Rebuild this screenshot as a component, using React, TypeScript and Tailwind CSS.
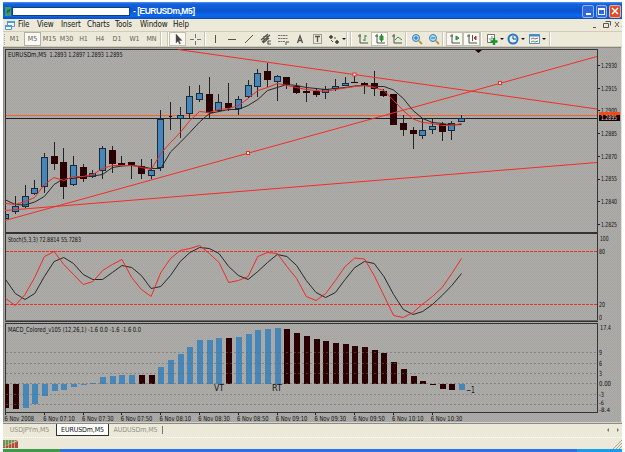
import React from "react";

const STEP = 9.7;
const X0 = 5.6;
const cx = (i: number) => X0 + i * STEP;

// [wickTop, bodyTop, bodyBottom, wickBottom, kind] where kind is 0 falling, 1 rising, 2 doji
const candles: number[][] = [
  [206, 214, 219, 220, 1], [196, 206, 212, 214, 1], [185, 196, 207, 208, 1], [180, 188, 194, 195, 1],
  [153, 157, 187, 193, 1], [142, 156, 164, 170, 0], [148, 162, 187, 199, 0], [156, 165, 185, 186, 1],
  [164, 167, 179, 182, 0], [170, 173, 177, 178, 1], [146, 148, 171, 179, 1], [146, 150, 164, 173, 0],
  [156, 163, 166, 166, 0], [162, 162, 165, 179, 0], [159, 166, 174, 179, 0], [159, 170, 176, 179, 1],
  [110, 119, 168, 171, 1], [102, 116, 117, 130, 2], [107, 115, 119, 138, 1], [86, 96, 114, 119, 1],
  [85, 93, 100, 102, 1], [77, 94, 113, 118, 0], [94, 102, 111, 112, 1], [83, 103, 108, 111, 0],
  [96, 99, 109, 115, 1], [80, 85, 97, 98, 1], [69, 73, 87, 97, 1], [63, 71, 80, 87, 0],
  [75, 76, 82, 101, 1], [77, 77, 85, 89, 0], [83, 86, 93, 94, 0], [83, 91, 93, 102, 0],
  [88, 91, 95, 97, 0], [86, 89, 93, 99, 1], [79, 86, 89, 91, 1], [77, 83, 86, 86, 1],
  [74, 82, 83, 83, 0], [82, 83, 85, 94, 0], [71, 83, 89, 96, 0], [89, 91, 96, 97, 0],
  [94, 94, 125, 125, 0], [115, 123, 130, 136, 0], [127, 130, 134, 149, 0], [118, 130, 136, 139, 1],
  [118, 126, 130, 134, 1], [122, 124, 132, 141, 0], [121, 123, 131, 140, 1], [115, 118, 122, 122, 1],
];

const fastMa = [203, 204, 201, 197, 184, 177, 180, 176, 176, 174, 168, 165, 165, 165, 167, 169, 153, 142, 132, 120, 111, 112, 109, 108, 105, 98, 90, 87, 83, 85, 87, 89, 90, 91, 89, 87.5, 86, 85, 87, 90, 100, 110, 118.5, 122, 123, 125, 125, 123];
const slowMa = [199.5, 204, 204.5, 201.5, 196, 184, 178, 178, 176, 175.5, 174, 167, 165.5, 165, 166, 168, 168, 151.5, 142, 132, 121.5, 113, 111, 109, 109, 105, 99, 90, 87, 84, 85, 87, 88, 89, 88, 87, 85.5, 85, 86, 86, 89.5, 98, 110, 118, 122, 123, 124.5, 124];
const stochK = [298, 305, 294, 277, 256, 251, 264, 274, 284, 281, 270, 264, 259, 277, 289, 296, 272, 258, 250, 248, 245, 253, 262, 282, 280, 276, 256, 252, 253, 266, 278, 296, 300, 293, 280, 266, 257.5, 258.5, 275, 295, 315, 317, 312, 303.5, 296, 287, 273, 258];
const stochD = [279, 293, 299, 293, 276, 261, 257, 263, 274, 279, 279, 272, 265, 267, 275, 288, 286, 275, 261, 252, 247, 248, 253, 266, 275, 279, 271, 262, 254, 256, 265, 280, 292, 297, 292, 279, 267, 261, 263, 276, 294, 309, 314, 311, 304, 295, 285, 273];
const macd = [407, 408, 407, 403, 395, 390, 389, 386, 384.5, 383, 377, 376, 375, 375, 375, 375, 367, 360, 354, 347, 340, 340, 338, 338, 337, 334, 330, 329, 328, 329, 333, 336, 339, 341, 343, 344, 346, 347, 350, 353, 362, 369, 376, 381, 384.5, 388, 389, 389];
const macdDark = (i: number) => i < 2 || i === 14 || i === 15 || i === 23 || (i > 28 && i < 47);

const pts = (a: number[]) => a.map((y, i) => `${cx(i)},${y + 0.5}`).join(" ");
const prices = ["1.2930", "1.2915", "1.2900", "1.2885", "1.2870", "1.2855", "1.2840", "1.2825"];
const times = ["6 Nov 2008", "6 Nov 07:10", "6 Nov 07:30", "6 Nov 07:50", "6 Nov 08:10", "6 Nov 08:30", "6 Nov 08:50", "6 Nov 09:10", "6 Nov 09:30", "6 Nov 09:50", "6 Nov 10:10", "6 Nov 10:30"];

const INK = "#222222";

function Label({ x, y, w, children, size = 7, fill = "#111" }: { x: number; y: number; w: number; children: string; size?: number; fill?: string }) {
  return (
    <text x={x} y={y} textLength={w} lengthAdjust="spacingAndGlyphs" fontSize={size} fill={fill}>{children}</text>
  );
}

function Mesh({ id, top, height }: { id: string; top: number; height: number }) {
  return (
    <g shapeRendering="crispEdges">
      <pattern id={id} width="4" height="4" patternUnits="userSpaceOnUse">
        <rect width="4" height="4" fill="#b0ada5" />
        <path d="M0 0h1v1h-1zM2 0h1v1h-1zM1 1h1v1h-1zM3 1h1v1h-1zM0 2h1v1h-1zM2 2h1v1h-1zM1 3h1v1h-1zM3 3h1v1h-1z" fill="#a3a3a2" />
        <path d="M0 2h1v1h-1zM3 1h1v1h-1z" fill="#a2a5b2" />
      </pattern>
      <rect x="3" y={top} width="619" height={height} fill={`url(#${id})`} />
      <rect x="3" y={top} width="1" height={height} fill="#8c8a84" />
      <rect x="621" y={top} width="1" height={height} fill="#e6e3d6" />
    </g>
  );
}

function Frame({ top, bottom }: { top: number; bottom: number }) {
  return (
    <g shapeRendering="crispEdges" fill="#333">
      <rect x="5" y={top} width="593" height="1" />
      <rect x="5" y={top} width="1" height={bottom - top} />
      <rect x="597" y={top} width="1" height={bottom - top} />
      <rect x="5" y={bottom - 1} width="593" height="1" />
    </g>
  );
}

function PricePanel() {
  return (
    <svg className="block h-[186px] w-[619px] shrink-0" viewBox="3 47 619 186">
      <Mesh id="meshPrice" top={47} height={186} />
      <rect x="3" y="47" width="618" height="1" fill="#86847e" />
      <Frame top={49} bottom={233} />
      <g shapeRendering="crispEdges">
        <rect x="6" y="115" width="591" height="1" fill="#f4622f" />
        <rect x="6" y="118" width="591" height="1" fill="#222" />
        {candles.map(([wt, bt, bb, wb, kind], i) => {
          const c = Math.round(cx(i) - 0.5);
          const left = Math.max(5, c - 3);
          return (
            <g key={i}>
              <rect x={c} y={wt} width="1" height={wb - wt} fill={INK} />
              {kind === 1 && (
                <>
                  <rect x={left} y={bt} width={c + 4 - left} height={bb - bt} fill="#182c3c" />
                  <rect x={left + 1} y={bt + 1} width={c + 2 - left} height={Math.max(1, bb - bt - 2)} fill="#4686b8" />
                </>
              )}
              {kind === 0 && <rect x={c - 3} y={bt} width="7" height={bb - bt} fill="#2b0003" />}
              {kind === 2 && <rect x={c - 1} y={bt} width="3" height="1" fill="#2b0003" />}
            </g>
          );
        })}
      </g>
      <g fill="none" strokeWidth="1">
        <polyline points={pts(slowMa)} stroke="#282828" />
        <polyline points={pts(fastMa)} stroke="#f02a25" />
        <path d="M5 220.5 597 56.5M5 210.5 597 162.5M178 49.5 597 109" stroke="#f52c26" />
      </g>
      {[[248, 153], [500, 83], [354.5, 74.5]].map(([x, y]) => (
        <rect key={x} x={x - 1.5} y={y - 1.5} width="3" height="3" fill="#fff" stroke="#f52c26" />
      ))}
      <path d="M475 50h7l-3.500 3z" fill="#200" />
      {prices.map((p, i) => (
        <g key={p}>
          <rect x="598" y={Math.round(65 + i * 22.7)} width="2" height="1" fill="#222" />
          <Label x={601} y={67.8 + i * 22.7} w={16}>{p}</Label>
        </g>
      ))}
      <rect x="599" y="112" width="21" height="3" fill="#ff4613" />
      <rect x="599" y="115" width="21" height="6" fill="#160000" />
      <Label x={601} y={120.4} w={16} fill="#e8d8d0">1.2895</Label>
      <Label x={8} y={56.8} w={38.5}>EURUSDm,M5</Label>
      <Label x={49.5} y={56.8} w={73}>1.2893 1.2897 1.2893 1.2895</Label>
    </svg>
  );
}

function StochPanel() {
  return (
    <svg className="block h-[89px] w-[619px] shrink-0" viewBox="3 233 619 89">
      <Mesh id="meshStoch" top={233} height={89} />
      <Frame top={233} bottom={322} />
      <rect x="5" y="320" width="593" height="1" fill="#666" />
      <path d="M6 251.5H597M6 304.5H597" stroke="#f52c26" strokeDasharray="3 1" fill="none" />
      <g fill="none">
        <polyline points={pts(stochD)} stroke="#282828" />
        <polyline points={pts(stochK)} stroke="#f02a25" />
      </g>
      <Label x={8} y={242} w={73}>Stoch(5,3,3) 72.8814 55.7283</Label>
      <Label x={600} y={240.7} w={8.5}>100</Label>
      <Label x={599} y={254} w={6}>80</Label>
      <Label x={599} y={306.8} w={6}>20</Label>
      <Label x={599} y={320.4} w={3}>0</Label>
    </svg>
  );
}

function MacdPanel() {
  return (
    <svg className="block h-[102px] w-[619px] shrink-0" viewBox="3 322 619 102">
      <Mesh id="meshMacd" top={322} height={102} />
      <Frame top={323} bottom={413} />
      <g shapeRendering="crispEdges">
        {macd.map((y, i) => {
          const c = Math.round(cx(i) - 0.5);
          const left = Math.max(5, c - 2);
          const top = Math.min(y, 383.5);
          return <rect key={i} x={left} y={Math.round(top)} width={c + 4 - left} height={Math.max(1, Math.round(Math.abs(y - 383.5)))} fill={macdDark(i) ? "#2b0003" : "#4686b8"} />;
        })}
      </g>
      <path d="M6 352.5H597M6 363.5H597M6 373.5H597M6 383.5H597M6 394.5H597M6 404.5H597" stroke="#666" strokeOpacity=".65" strokeDasharray="2 2" strokeWidth=".8" fill="none" />
      <Label x={8} y={331.8} w={133}>MACD_Colored_v105 (12,26,1) -1.6 0.0 -1.6 -1.6 0.0</Label>
      <Label x={600} y={330} w={11}>17.4</Label>
      <Label x={599} y={355.2} w={3}>9</Label>
      <Label x={599} y={365.5} w={3}>6</Label>
      <Label x={599} y={375.8} w={3}>3</Label>
      <Label x={599} y={386} w={12}>0.00</Label>
      <Label x={599} y={396.6} w={5}>-3</Label>
      <Label x={599} y={405.4} w={5} size={6}>-6</Label>
      <Label x={599} y={411.8} w={11} size={6}>-8.4</Label>
      <Label x={214} y={391.2} w={10} size={8.5}>VT</Label>
      <Label x={272} y={391.2} w={10} size={8.5}>RT</Label>
      <Label x={466} y={393} w={9} size={8.5}>−1</Label>
      {times.map((t, i) => (
        <g key={t}>
          <rect x={Math.round(5 + i * 38.8)} y="413" width="1" height="2" fill="#222" />
          <Label x={4.5 + i * 38.75} y={421} w={i ? 31.5 : 29.5}>{t}</Label>
        </g>
      ))}
      <rect x="3" y="422" width="619" height="1" fill="#d5d2ca" />
      <rect x="3" y="423" width="619" height="1" fill="#8c8a84" />
    </svg>
  );
}

function Sep() {
  return <span className="h-[14px] w-[2px] shrink-0 border-l border-[#c9c5b5] bg-white" />;
}

function Icon({ children, className = "" }: { children: React.ReactNode; className?: string }) {
  return (
    <span className={`flex h-[14px] w-[17px] shrink-0 items-center justify-center ${className}`}>
      <svg className="h-[12px] w-[12px] shrink-0" viewBox="0 0 12 12" fill="none" stroke="#55534d">{children}</svg>
    </span>
  );
}

function Caret() {
  return <svg className="h-[4px] w-[4px] shrink-0" viewBox="0 0 4 4"><path d="M0 1h4L2 3z" fill="#111" /></svg>;
}

function TitleBar() {
  return (
    <header className="flex h-[17px] shrink-0 items-center bg-[linear-gradient(#5592f0_0,#1261dc_2px,#0b55cc_9px,#086af2_14px,#1149b8_17px)] pr-px pt-px">
      <span className="ml-[2px] flex h-[9px] w-[6px] items-center justify-center bg-[#3f9865]">
        <svg className="h-[7px] w-[5px]" viewBox="0 0 5 7"><path d="M1 5 2 2 3 4 4 1" stroke="#206040" fill="none" /></svg>
      </span>
      <span className="ml-px h-[9px] w-[118px] border border-[#143f7c] bg-white" />
      <span className="ml-[3px] w-[61px] whitespace-nowrap font-['Liberation_Sans',sans-serif] text-[8.5px] font-bold leading-[12px] tracking-[-0.5px] text-white">- [EURUSDm,M5]</span>
      <span className="flex-1" />
      <div className="flex h-[13px] gap-[2px]">
        <span className="flex w-[12px] items-end justify-center rounded-[2px] border border-[#8eb3f1] bg-[#3167da] pb-[2px]"><i className="h-[2px] w-[5px] bg-white" /></span>
        <span className="flex w-[11px] items-center justify-center rounded-[2px] border border-[#8eb3f1] bg-[#3167da]"><i className="h-[7px] w-[7px] border border-t-2 border-white" /></span>
        <span className="flex w-[12px] items-center justify-center rounded-[2px] border border-[#eab09b] bg-[#dc4e28]">
          <svg className="h-[8px] w-[8px]" viewBox="0 0 8 8"><path d="m1 1 6 6M7 1 1 7" stroke="#fff" strokeWidth="1.5" /></svg>
        </span>
      </div>
    </header>
  );
}

function MenuBar() {
  return (
    <nav className="flex h-[12px] shrink-0 items-center text-[8px] leading-[12px] tracking-[-0.15px] text-[#161616]">
      <svg className="ml-[2px] h-[11px] w-[10px] shrink-0" viewBox="0 0 10 11" fill="#f3f8fc" stroke="#559ac8">
        <path d="M2.5 1.5h7v5h-7zM.5 5.5h6v4h-6z" /><path d="M2 2h8M0 6h7" strokeWidth="2" />
      </svg>
      <span className="ml-[3px] w-[19px]">File</span>
      <span className="w-[24px]">View</span>
      <span className="w-[26px]">Insert</span>
      <span className="w-[28px]">Charts</span>
      <span className="w-[25px]">Tools</span>
      <span className="w-[33px]">Window</span>
      <span>Help</span>
      <span className="flex-1" />
      <svg className="mr-[2px] h-[8px] w-[28px]" viewBox="0 0 28 8" fill="none" stroke="#5a5750">
        <path d="M1 6.5h3M13.5.5h5v4M11.5 2.5h5v4h-5zM23 1l4 5M27 1l-4 5" />
      </svg>
    </nav>
  );
}

function Tf({ w, children }: { w: string; children: string }) {
  return <span className={`shrink-0 text-center ${w}`}>{children}</span>;
}

function ToolBar() {
  return (
    <div className="flex h-[16px] shrink-0 items-center border-y border-t-[#d5c8bd] border-b-[#d0cdbc] text-[7px] leading-[14px] text-[#5f5d56]">
      <span className="ml-px h-[11px] w-px border-l border-dotted border-[#aaa69a]" />
      <Tf w="w-[19px]">M1</Tf>
      <span className="h-[14px] w-[17px] shrink-0 border border-[#b5b0a2] bg-[#faf9f4] text-center leading-[12px]">M5</span>
      <Tf w="w-[17px]">M15</Tf>
      <Tf w="w-[17px]">M30</Tf>
      <Tf w="w-[17px]">H1</Tf>
      <Tf w="w-[16px]">H4</Tf>
      <Tf w="w-[18px]">D1</Tf>
      <Tf w="w-[17px]">W1</Tf>
      <Tf w="w-[17px]">MN</Tf>
      <Sep /><span className="w-[5px] shrink-0" /><Sep />
      <Icon className="border border-[#c4c0b0] bg-[#faf9f4]"><path d="M4 1v9l2-2 1.5 3 1-.5L7 7.500h3z" fill="#444" strokeWidth=".4" /></Icon>
      <Icon className="mr-px"><path d="M6.500 1v4M6.500 8v4M1 6.500h4M8 6.500h4" strokeWidth=".8" /></Icon>
      <Sep />
      <Icon><path d="M6.500 2v8" /></Icon>
      <Icon><path d="M2 6.500h8" /></Icon>
      <Icon><path d="m2 10 8-8" /></Icon>
      <Icon><path d="m1 7 7-6M2 9l8-7M3 10l6-5M4 3v6M7 2v5M8 8h3M8 8v3h3" strokeWidth="1.2" /></Icon>
      <Icon><path d="M1 2.500h10M1 5.500h10M1 8.500h7" strokeDasharray="2 .5" strokeWidth=".8" /><path d="M9 12V9h3" /></Icon>
      <Icon><path d="m3.500 10 2.500-7 2.500 7M4.500 7.500h3" strokeWidth="1.3" /></Icon>
      <Icon><path d="M2.500 1.500h8v9h-8z" strokeDasharray="1 1" /><path d="M4 3.500h5M6.500 3v6" strokeWidth="1.3" /></Icon>
      <Icon><path d="m1 4 2-2 2 2-2 2zM7 9l2-2 2 2-2 2z" fill="#444" strokeWidth=".6" /><path d="m3 7 2 2M6 5h2" /></Icon>
      <Caret />
      <Sep /><span className="w-[2px] shrink-0" /><Sep />
      <Icon className="ml-[2px]"><path d="M3 1v9h8M1 3h3" /><path d="M8 2v6M6 7h2M8 3h2" stroke="#329449" /></Icon>
      <Icon className="border border-[#c4c0b0] bg-[#faf9f4]"><path d="M3 1v9h8M1 3h3" /><path d="M6 3h3v4H6zM7.500 1v8" fill="#31a647" stroke="#278f3c" /></Icon>
      <Icon><path d="M3 1v9h8M1 3h3" /><path d="m4 7 3-3 4 3" stroke="#329449" /></Icon>
      <Sep />
      <Icon className="ml-px"><circle cx="5" cy="5" r="3.500" fill="#b2dbf2" stroke="#357db7" /><path d="M3 5h4M5 3v4" stroke="#246ea7" /><path d="m8 8 3 3" stroke="#bc9b37" strokeWidth="2" /></Icon>
      <Icon><circle cx="5" cy="5" r="3.500" fill="#b2dbf2" stroke="#357db7" /><path d="M3 5h4" stroke="#246ea7" /><path d="m8 8 3 3" stroke="#bc9b37" strokeWidth="2" /></Icon>
      <Sep />
      <Icon className="ml-[2px] border border-[#c4c0b0] bg-[#faf9f4]"><path d="M3 1v9h8M1 3h3" /><path d="m7 3 3 2-3 2z" fill="#31a647" stroke="#278f3c" /></Icon>
      <Icon className="border border-[#c4c0b0] bg-[#faf9f4]"><path d="M3 1v9h8M1 3h3M6.500 2v6" /><path d="m10 3-2 2 2 2z" fill="#cb3e35" stroke="#b6332e" /></Icon>
      <Sep />
      <Icon className="ml-px"><path d="M1.500 1.500h7v8h-7z" fill="#fff" strokeWidth=".8" /><path d="M3 6h3V3" strokeWidth=".7" /><path d="M8 5v7M4.500 8.500h7" stroke="#14962b" strokeWidth="2.4" /></Icon>
      <Caret />
      <Icon><circle cx="6" cy="6" r="4.500" fill="#e4f3fc" stroke="#2478c9" strokeWidth="2" /><path d="M6 3v3h3" stroke="#345" /></Icon>
      <Caret />
      <Icon><path d="M1.500 1.500h10v9h-10z" fill="#f7fbff" stroke="#5b8fb5" /><path d="M1 2.500h11" stroke="#3f8acb" strokeWidth="2" /><path d="m3 6 2-1 2 1 3-1" stroke="#c05b4c" /><path d="m3 9 2-1 2 1 3-1" stroke="#43a35c" /></Icon>
      <Caret />
      <span className="w-[3px] shrink-0" /><Sep />
    </div>
  );
}

function Tabs() {
  return (
    <div className="flex h-[14px] shrink-0 items-start border-b border-dotted border-white text-[7px] leading-[12px] tracking-[-0.1px] text-[#929087]">
      <span className="w-[53px] text-center">USDJPYm,M5</span>
      <span className="h-[12px] w-[53px] border border-t-0 border-[#333] bg-white text-center text-[#111]">EURUSDm,M5</span>
      <span className="w-[53px] text-center">AUDUSDm,M5</span>
      <span className="mt-[2px] h-[8px] w-px bg-[#777]" />
      <span className="flex-1" />
      <svg className="mr-[3px] mt-[4px] h-[4px] w-[12px]" viewBox="0 0 12 4" fill="#777"><path d="M2 0v4L0 2zM10 0v4l2-2z" /></svg>
    </div>
  );
}

function StatusBar() {
  return (
    <footer className="flex h-[11px] shrink-0 items-center justify-between">
      <svg className="h-[8px] w-[15px]" viewBox="0 0 15 8">
        <path d="M0 0h15L0 7z" fill="#679553" /><path d="M15 1v7H0V7z" fill="#b64c40" />
        <path d="M2.500 0v8M5.500 0v8M8.500 0v8M11.500 0v8" stroke="#d7c5a1" strokeWidth=".7" />
      </svg>
      <svg className="h-[10px] w-[10px]" viewBox="0 0 10 10" stroke="#aaa799"><path d="m1 10 9-9M4 10l6-6M7 10l3-3" /></svg>
    </footer>
  );
}

export default function App() {
  return (
    <main className="h-[452px] w-[625px] overflow-hidden bg-white pl-[3px] pt-[2px] font-['DejaVu_Sans_Condensed','DejaVu_Sans',sans-serif]">
      <div className="flex h-[450px] w-[619px] flex-col bg-[#ece9d8]">
        <TitleBar />
        <MenuBar />
        <ToolBar />
        <section className="flex h-[377px] shrink-0 flex-col bg-[#a9a7a5]">
          <PricePanel />
          <StochPanel />
          <MacdPanel />
        </section>
        <Tabs />
        <StatusBar />
        <div className="flex h-[3px] shrink-0">
          <span className="w-[57px] bg-[#3c9b46]" />
          <span className="flex-1 bg-[#2d73df]" />
          <span className="w-[45px] bg-[#1a9ced]" />
        </div>
      </div>
    </main>
  );
}
